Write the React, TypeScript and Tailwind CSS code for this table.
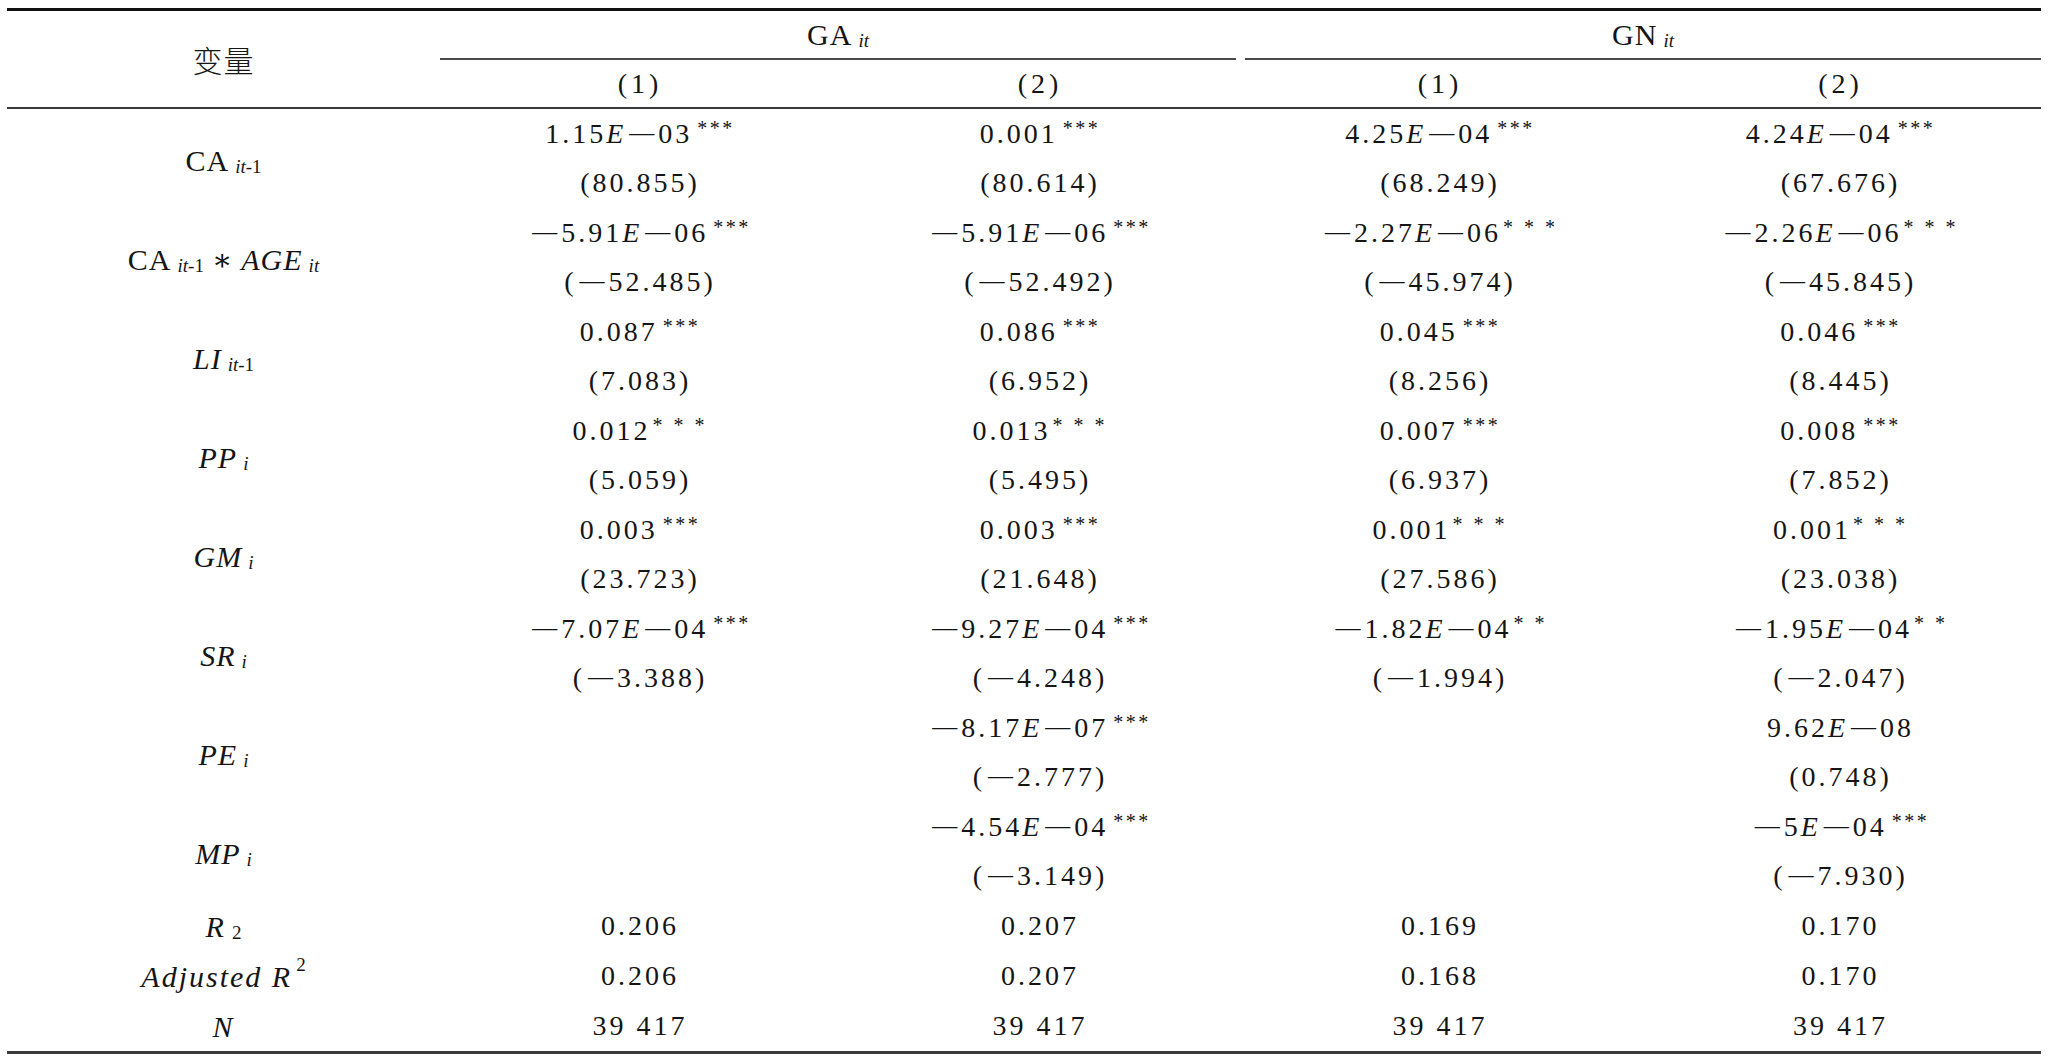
import React from "react";

type Cell = { v: string; s?: string } | null;

const FONT = "font-['Liberation_Serif','DejaVu_Serif','Noto_Sans_CJK_SC',serif]";

function Minus() {
  return (
    <span className="relative -top-[2px] mr-[4px] ml-[3px] text-[25px] tracking-normal">—</span>
  );
}

function Num({ text }: { text: string }) {
  const out: React.ReactNode[] = [];
  let buf = "";
  let k = 0;
  const flush = () => {
    if (buf) out.push(<React.Fragment key={k++}>{buf}</React.Fragment>);
    buf = "";
  };
  for (const ch of text) {
    if (ch === "-") {
      flush();
      out.push(<Minus key={k++} />);
    } else if (ch === "E") {
      flush();
      out.push(
        <span key={k++} className="italic">
          E
        </span>
      );
    } else buf += ch;
  }
  flush();
  return <>{out}</>;
}

function Stars({ s }: { s?: string }) {
  if (!s) return null;
  const spaced = s.includes(" ");
  return (
    <span
      className={
        "relative -top-[8px] whitespace-pre text-[20px] " +
        (spaced ? "ml-[2px] tracking-[3px]" : "ml-[5px] tracking-[2.5px]")
      }
    >
      {s}
    </span>
  );
}

function Sub({ children }: { children: React.ReactNode }) {
  return (
    <span className="relative top-[7px] ml-[6px] text-[19px] tracking-normal">
      {children}
    </span>
  );
}

function Sup({ children }: { children: React.ReactNode }) {
  return (
    <span className="relative -top-[11px] ml-[4px] text-[19px] tracking-normal not-italic">
      {children}
    </span>
  );
}

const labels: React.ReactNode[] = [
  <>
    <span>CA</span>
    <Sub>
      <i>it</i>-1
    </Sub>
  </>,
  <>
    <span>CA</span>
    <Sub>
      <i>it</i>-1
    </Sub>
    <span className="mx-[8px]">∗</span>
    <i>AGE</i>
    <Sub>
      <i>it</i>
    </Sub>
  </>,
  <>
    <i>LI</i>
    <Sub>
      <i>it</i>-1
    </Sub>
  </>,
  <>
    <i>PP</i>
    <Sub>
      <i>i</i>
    </Sub>
  </>,
  <>
    <i>GM</i>
    <Sub>
      <i>i</i>
    </Sub>
  </>,
  <>
    <i>SR</i>
    <Sub>
      <i>i</i>
    </Sub>
  </>,
  <>
    <i>PE</i>
    <Sub>
      <i>i</i>
    </Sub>
  </>,
  <>
    <i>MP</i>
    <Sub>
      <i>i</i>
    </Sub>
  </>,
];

const rows: { vals: Cell[]; t: string[] }[] = [
  {
    vals: [
      { v: "1.15E-03", s: "***" },
      { v: "0.001", s: "***" },
      { v: "4.25E-04", s: "***" },
      { v: "4.24E-04", s: "***" },
    ],
    t: ["(80.855)", "(80.614)", "(68.249)", "(67.676)"],
  },
  {
    vals: [
      { v: "-5.91E-06", s: "***" },
      { v: "-5.91E-06", s: "***" },
      { v: "-2.27E-06", s: "* * *" },
      { v: "-2.26E-06", s: "* * *" },
    ],
    t: ["(-52.485)", "(-52.492)", "(-45.974)", "(-45.845)"],
  },
  {
    vals: [
      { v: "0.087", s: "***" },
      { v: "0.086", s: "***" },
      { v: "0.045", s: "***" },
      { v: "0.046", s: "***" },
    ],
    t: ["(7.083)", "(6.952)", "(8.256)", "(8.445)"],
  },
  {
    vals: [
      { v: "0.012", s: "* * *" },
      { v: "0.013", s: "* * *" },
      { v: "0.007", s: "***" },
      { v: "0.008", s: "***" },
    ],
    t: ["(5.059)", "(5.495)", "(6.937)", "(7.852)"],
  },
  {
    vals: [
      { v: "0.003", s: "***" },
      { v: "0.003", s: "***" },
      { v: "0.001", s: "* * *" },
      { v: "0.001", s: "* * *" },
    ],
    t: ["(23.723)", "(21.648)", "(27.586)", "(23.038)"],
  },
  {
    vals: [
      { v: "-7.07E-04", s: "***" },
      { v: "-9.27E-04", s: "***" },
      { v: "-1.82E-04", s: "* *" },
      { v: "-1.95E-04", s: "* *" },
    ],
    t: ["(-3.388)", "(-4.248)", "(-1.994)", "(-2.047)"],
  },
  {
    vals: [null, { v: "-8.17E-07", s: "***" }, null, { v: "9.62E-08" }],
    t: ["", "(-2.777)", "", "(0.748)"],
  },
  {
    vals: [null, { v: "-4.54E-04", s: "***" }, null, { v: "-5E-04", s: "***" }],
    t: ["", "(-3.149)", "", "(-7.930)"],
  },
];

const stats: { label: React.ReactNode; vals: string[] }[] = [
  {
    label: (
      <>
        <i>R</i>
        <Sub>2</Sub>
      </>
    ),
    vals: ["0.206", "0.207", "0.169", "0.170"],
  },
  {
    label: (
      <>
        <i>Adjusted R</i>
        <Sup>2</Sup>
      </>
    ),
    vals: ["0.206", "0.207", "0.168", "0.170"],
  },
  {
    label: <i>N</i>,
    vals: ["39 417", "39 417", "39 417", "39 417"],
  },
];

const colW = ["w-[400px]", "w-[400px]", "w-[400px]", "w-[401px]"];

export default function App() {
  return (
    <div className={"min-h-[1056px] w-[2048px] bg-white pt-[8px] text-[#151515] " + FONT}>
      <div className="ml-[7px] w-[2034px] border-t-[3px] border-b-[3px] border-t-[#111] border-b-[#3a3a3a]">
        {/* Header */}
        <div className="flex h-[98px] border-b-2 border-[#3a3a3a]">
          <div className="flex w-[433px] items-center justify-center font-['Noto_Sans_CJK_SC',sans-serif] text-[30px] font-light tracking-[1px]">
            变量
          </div>
          <div className="flex flex-1 flex-col">
            <div className="flex h-[49px]">
              <div className="w-[800px] pr-[4px]">
                <div className="flex h-full items-center justify-center border-b-2 border-[#4a4a4a] text-[30px] tracking-[1px]">
                  <span>GA</span>
                  <Sub>
                    <i>it</i>
                  </Sub>
                </div>
              </div>
              <div className="flex-1 pl-[5px]">
                <div className="flex h-full items-center justify-center border-b-2 border-[#4a4a4a] text-[30px] tracking-[1px]">
                  <span>GN</span>
                  <Sub>
                    <i>it</i>
                  </Sub>
                </div>
              </div>
            </div>
            <div className="flex h-[47px] text-[28px] tracking-[4px]">
              {["(1)", "(2)", "(1)", "(2)"].map((h, i) => (
                <div key={i} className={"flex items-center justify-center " + colW[i]}>
                  {h}
                </div>
              ))}
            </div>
          </div>
        </div>

        {/* Body */}
        {rows.map((r, ri) => (
          <div key={ri} className="flex h-[99px]">
            <div className="flex w-[433px] items-center justify-center pt-[4px] text-[30px] tracking-[1px]">
              {labels[ri]}
            </div>
            {r.vals.map((c, ci) => (
              <div key={ci} className={"flex flex-col text-[28px] tracking-[3px] " + colW[ci]}>
                <div className="flex h-[49.5px] items-center justify-center whitespace-pre">
                  {c && (
                    <span>
                      <Num text={c.v} />
                      <Stars s={c.s} />
                    </span>
                  )}
                </div>
                <div className="flex h-[49.5px] items-center justify-center whitespace-pre">
                  {r.t[ci] && (
                    <span>
                      <Num text={r.t[ci]} />
                    </span>
                  )}
                </div>
              </div>
            ))}
          </div>
        ))}

        {stats.map((s, si) => (
          <div key={si} className="flex h-[50px]">
            <div className="flex w-[433px] items-center justify-center text-[30px] tracking-[2px]">
              {s.label}
            </div>
            {s.vals.map((v, vi) => (
              <div
                key={vi}
                className={"flex items-center justify-center whitespace-pre text-[28px] tracking-[3px] " + colW[vi]}
              >
                {v}
              </div>
            ))}
          </div>
        ))}
      </div>
    </div>
  );
}
